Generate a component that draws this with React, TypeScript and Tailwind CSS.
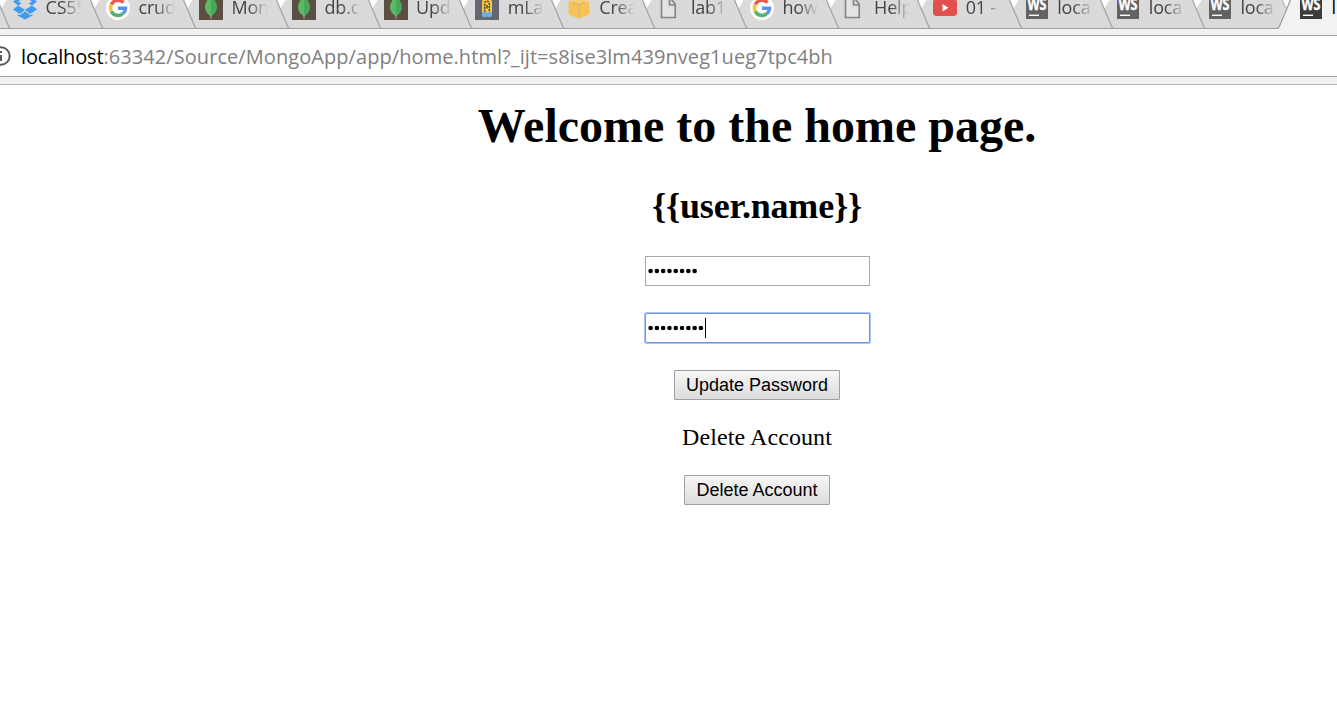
import React from 'react';

type IconName = 'dropbox' | 'google' | 'mongo' | 'mlab' | 'aws' | 'page' | 'youtube' | 'ws';

const tabs: { icon: IconName; title: string }[] = [
  { icon: 'dropbox', title: 'CS55' },
  { icon: 'google', title: 'crud' },
  { icon: 'mongo', title: 'Mon' },
  { icon: 'mongo', title: 'db.c' },
  { icon: 'mongo', title: 'Upd' },
  { icon: 'mlab', title: 'mLa' },
  { icon: 'aws', title: 'Crea' },
  { icon: 'page', title: 'lab1' },
  { icon: 'google', title: 'how' },
  { icon: 'page', title: 'Help' },
  { icon: 'youtube', title: '01 -' },
  { icon: 'ws', title: 'loca' },
  { icon: 'ws', title: 'loca' },
  { icon: 'ws', title: 'loca' },
];

function TabIcon({ name, active = false }: { name: IconName; active?: boolean }) {
  return (
    <svg viewBox="0 0 24 24" className="block size-6 shrink-0 overflow-visible">
      {name === 'dropbox' && (
        <g fill="#3d9af0">
          <path d="M7 1L0 5.500L5 9.500L12 5.200ZM17 1L24 5.500L19 9.500L12 5.200Z" />
          <path d="M0 13.500L5 9.500L12 13.700L7 18ZM24 13.500L19 9.500L12 13.700L17 18Z" />
          <path d="M5 5.500L12 1.500L19 5.500L12 9.500Z" fill="#dadada" />
          <path d="M4.500 18.300L7 19.300L12 15.200L17 19.300L19.500 18.300V19.500L12 23.500L4.500 19.500Z" />
        </g>
      )}
      {name === 'google' && (
        <g>
          <circle cx="12" cy="12" r="12" fill="#fff" />
          <g fill="none" strokeWidth="3.500">
            <path d="M17.500 6.600A7.500 7.500 0 0 0 5.300 8.600" stroke="#e95a4e" />
            <path d="M5.300 8.600A7.500 7.500 0 0 0 5.300 15.400" stroke="#f8c63a" />
            <path d="M5.300 15.400A7.500 7.500 0 0 0 16.800 17.700" stroke="#55b46c" />
            <path d="M16.800 17.700A7.500 7.500 0 0 0 19.500 12.200H12" stroke="#5c90ee" />
          </g>
        </g>
      )}
      {name === 'mongo' && (
        <g>
          <rect width="24" height="24" fill="#5d4e43" />
          <path d="M12 0C7 5 5 9 6.500 14C7.500 17 9.500 18.500 12 20.500Z" fill="#5cb865" />
          <path d="M12 0C17 5 19 9 17.500 14C16.500 17 14.500 18.500 12 20.500Z" fill="#46a95a" />
          <path d="M12 18V23" stroke="#a7a58f" strokeWidth="1" />
        </g>
      )}
      {name === 'mlab' && (
        <g>
          <rect width="24" height="24" fill="#636770" />
          <path d="M7 17V6.500C7 0.500 17 0.500 17 6.500V17Z" fill="#f8c93e" />
          <path d="M9.700 16V7.500C9.700 4.500 14.300 4.500 14.300 7.500V16" fill="none" stroke="#4e4a3a" strokeWidth="1.500" strokeDasharray="2.200 0.800" />
          <path d="M12 9V12.500" stroke="#4e4a3a" strokeWidth="1.500" />
          <path d="M7 16.500L9 15.500L12 16.500L15 15.500L17 16.500V20L15 21.500L12 20.500L9 21.500L7 20Z" fill="#78ace0" />
        </g>
      )}
      {name === 'aws' && (
        <g>
          <path d="M1.500 5L11.500 8V22.500L1.500 18.500Z" fill="#f7c359" />
          <path d="M22.500 5L12.500 8V22.500L22.500 18.500Z" fill="#f7c359" />
          <path d="M11.500 8H12.500V22.500H11.500Z" fill="#dba544" />
          <path d="M1.500 4L12 1L22.500 4L12 7.500Z" fill="#f9cd6c" />
          <path d="M6 6.500L12 8.500L18 6.500" fill="none" stroke="#e2a842" strokeWidth="1" />
        </g>
      )}
      {name === 'page' && (
        <path d="M3.500 1H11.500L17.200 8V21.500H3.500ZM11.500 1V9H17.200" fill="#e4e4e4" stroke="#858585" strokeWidth="1.700" />
      )}
      {name === 'youtube' && (
        <g>
          <rect y="3" width="24" height="17" rx="3.500" fill="#e1504f" />
          <path d="M9.500 8L15.500 11.700L9.500 15.500Z" fill="#fff" />
        </g>
      )}
      {name === 'ws' && (
        <g>
          <rect x="1" y="0" width="22" height="23" fill={active ? '#3b3b3b' : '#626262'} />
          <text
            x="2.500"
            y="14"
            textLength="19"
            lengthAdjust="spacingAndGlyphs"
            fill="#fff"
            stroke="#fff"
            strokeWidth="0.400"
            className="font-['Open_Sans',sans-serif] text-[16px] font-bold"
          >
            WS
          </text>
          <path d="M4 19.300H14" stroke="#fff" strokeWidth="1.400" />
        </g>
      )}
    </svg>
  );
}

function Divider({ last = false }: { last?: boolean }) {
  return (
    <svg viewBox="0 0 24 29" className="-mr-6 block h-[29px] w-6 shrink-0">
      {last ? (
        <g>
          <path d="M0 29L12 0H24V29Z" fill="#f2f2f2" />
          <path d="M5 0H14L9.200 8.500Z" fill="#fff" />
          <path d="M5 0L9.200 8.500" fill="none" stroke="#b5b5b5" strokeWidth="1.200" />
          <path d="M13.500 0L2.500 26Q1.500 28.500 0 28.500" fill="none" stroke="#9b9b9b" strokeWidth="1.300" />
        </g>
      ) : (
        <g>
          <path d="M3.500 0H12.500L7.500 8.500Z" fill="#fff" />
          <path d="M3.500 0L14.500 26Q15.500 28.500 17 28.500" fill="none" stroke="#a5a5a5" strokeWidth="1.300" />
        </g>
      )}
    </svg>
  );
}

function TabStrip() {
  return (
    <div className="flex h-[29px] overflow-hidden bg-[#f2f2f2] font-['Open_Sans',sans-serif] text-[18px] text-[#444]">
      <div className="flex h-[29px] shrink-0 border-b border-[#9e9e9e] bg-[#dadada]">
        {tabs.map((tab, i) => (
          <div key={i} className={`flex h-[29px] shrink-0 ${i < 3 ? 'w-[93px]' : 'w-[91.6px]'}`}>
            <div className="-ml-[6px] mr-[6px] flex">
              <Divider />
            </div>
            <div className="-mt-1 ml-[13px] h-6">
              <TabIcon name={tab.icon} />
            </div>
            <div className="-mt-[5px] ml-[8.500px] h-6 w-[36px] overflow-hidden whitespace-nowrap leading-6 tracking-[-0.2px] [mask-image:linear-gradient(to_right,black_45%,transparent_100%)]">
              {tab.title}
            </div>
          </div>
        ))}
      </div>
      <div className="-ml-[10px] flex shrink-0">
        <Divider last />
        <div className="-mt-1 ml-[22.400px]">
          <TabIcon name="ws" active />
        </div>
        <div className="-mt-[5px] ml-[8.500px] leading-6 text-black">l</div>
      </div>
    </div>
  );
}

function AddressBar() {
  return (
    <div className="flex h-14 flex-col border-b border-[#b6b6b6] bg-[#f2f2f2] pt-[6px]">
      <div className="flex h-[42px] items-center overflow-hidden border-y border-[#a3a3a3] bg-white">
        <svg viewBox="0 0 20 20" className="-ml-[9px] block size-5 shrink-0">
          <circle cx="10" cy="10" r="8.700" fill="none" stroke="#5a5a5a" strokeWidth="2" />
          <path d="M10 9V15M10 5V7" stroke="#5a5a5a" strokeWidth="2" />
        </svg>
        <div className="ml-[10px] mt-[2px] whitespace-nowrap font-['Open_Sans',sans-serif] text-[20px] leading-[30px] tracking-[0.07px] text-[#808080]">
          <span className="tracking-[-0.15px] text-black">localhost</span>
          :63342/Source/MongoApp/app/home.html?_ijt=s8ise3lm439nveg1ueg7tpc4bh
        </div>
      </div>
    </div>
  );
}

function Dots({ count }: { count: number }) {
  return (
    <svg className="block h-[6px] shrink-0" width={count * 6.29} height={6}>
      {Array.from({ length: count }, (_, i) => (
        <circle key={i} cx={2.6 + i * 6.29} cy={3} r={2.3} fill="#000" />
      ))}
    </svg>
  );
}

function PushButton({ children }: { children: React.ReactNode }) {
  return (
    <button className="h-[30px] rounded-[1px] border border-[#a0a0a0] bg-linear-to-b from-[#f6f6f6] to-[#dddddd] px-[11px] font-['Liberation_Sans',sans-serif] text-[18px] leading-7 text-black">
      {children}
    </button>
  );
}

export default function App() {
  return (
    <div className="h-[712px] w-full overflow-hidden bg-white">
      <TabStrip />
      <AddressBar />
      <main className="flex w-[1514px] flex-col items-center font-['Liberation_Serif',serif] text-black">
        <h1 className="mt-[13px] text-[48px] font-bold leading-[55px]">Welcome to the home page.</h1>
        <h2 className="mt-[33px] text-[36px] font-bold leading-[41px] tracking-[-0.2px]">{'{{user.name}}'}</h2>
        <div className="mt-[29px] flex h-[30px] w-[225px] items-center border border-[#a9a9a9] pl-[2px]">
          <Dots count={8} />
        </div>
        <div className="mt-[27px] flex h-[30px] w-[225px] items-center rounded-[1px] border border-[#7097dc] pl-[2px] ring-1 ring-[#a9c6fa]">
          <Dots count={9} />
          <span className="ml-[0.500px] h-5 w-px bg-black" />
        </div>
        <div className="mt-[27px] flex">
          <PushButton>Update Password</PushButton>
        </div>
        <p className="mt-[24px] text-[24px] leading-[27px] tracking-[0.1px]">Delete Account</p>
        <div className="mt-[24px] flex">
          <PushButton>Delete Account</PushButton>
        </div>
      </main>
    </div>
  );
}
